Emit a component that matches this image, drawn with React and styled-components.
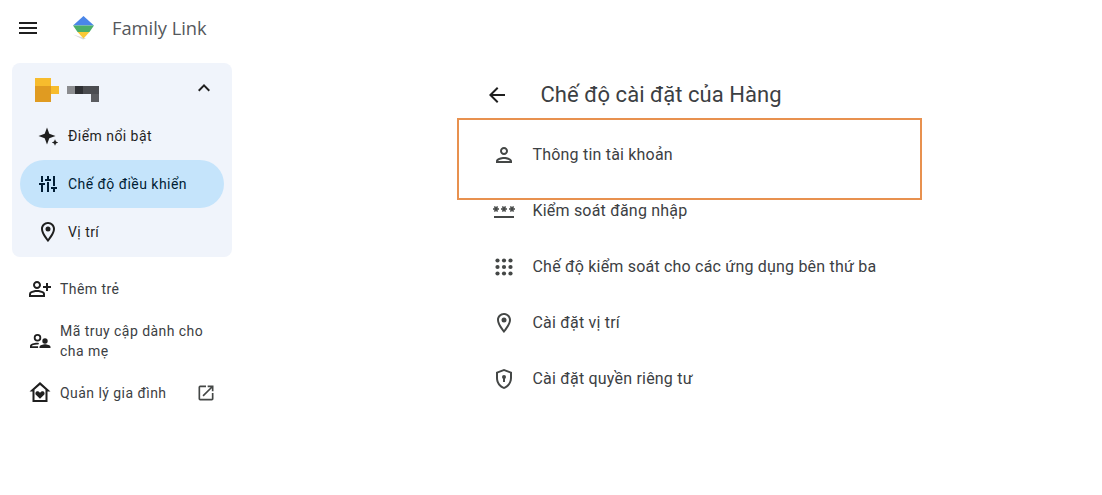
import React from 'react';
import styled, { createGlobalStyle } from 'styled-components';
import {
    MdMenu,
    MdExpandLess,
    MdOutlineLocationOn,
    MdOutlinePersonAddAlt,
    MdOutlineOpenInNew,
    MdArrowBack,
    MdOutlinePerson,
    MdPassword,
} from 'react-icons/md';

const GlobalStyle = createGlobalStyle`
    html, body {
        margin: 0;
        background: #fff;
    }
    body {
        font-family: Roboto, "Liberation Sans", sans-serif;
        color: #3c4043;
    }
`;

const Sparkle = () => (
    <svg width="24" height="24" viewBox="0 0 24 24" fill="currentColor">
        <path d="M11 3.500L13.300 9.700 19.500 12 13.300 14.300 11 20.500 8.700 14.300 2.500 12 8.700 9.700z" />
        <path d="M19 15.300L20 17.500 22.200 18.500 20 19.500 19 21.700 18 19.500 15.800 18.500 18 17.500z" />
    </svg>
);

const Sliders = () => (
    <svg width="24" height="24" viewBox="0 0 24 24" fill="currentColor">
        <rect x="5" y="4" width="2" height="6" />
        <rect x="3" y="11" width="6" height="2" />
        <rect x="5" y="13" width="2" height="7" />
        <rect x="11" y="4" width="2" height="3" />
        <rect x="9" y="7" width="6" height="2" />
        <rect x="11" y="10" width="2" height="10" />
        <rect x="17" y="4" width="2" height="10" />
        <rect x="15" y="15" width="6" height="2" />
        <rect x="17" y="17" width="2" height="3" />
    </svg>
);

const ParentCode = () => (
    <svg width="24" height="24" viewBox="0 0 24 24" fill="currentColor">
        <path d="M9.500 12.500a3.750 3.750 0 1 0 0-7.500 3.750 3.750 0 0 0 0 7.500zm0-5.700a1.950 1.950 0 1 1 0 3.900 1.950 1.950 0 0 1 0-3.900z" />
        <path d="M2 19v-2c0-2.300 4.400-3.300 7-3.300.6 0 1.300.1 2 .2l-.6 1.700c-.5-.1-1-.1-1.400-.1-2.500 0-5.200 1-5.200 1.600v.1h6.300V19z" />
        <circle cx="17" cy="12" r="2.700" />
        <path d="M11.500 19v-1c0-1.800 3.600-2.700 5.500-2.700s5.500.9 5.500 2.700v1z" />
    </svg>
);

const HomeHeart = () => (
    <svg width="24" height="24" viewBox="0 0 24 24" fill="currentColor">
        <path d="M12 1L1.500 10.500h3V21h15V10.500h3zM17.500 19h-11V8.800L12 4l5.500 4.800z" />
        <path d="M12 17.800l-3.900-3.700c-2-2.100.7-5 2.800-3.300l1.100 1 1.100-1c2.100-1.700 4.800 1.200 2.800 3.300z" />
    </svg>
);

const DotGrid = () => (
    <svg width="24" height="24" viewBox="0 0 24 24" fill="currentColor">
        {[5.5, 12, 18.5].map((y) =>
            [5.5, 12, 18.5].map((x) => <circle key={`${x}-${y}`} cx={x} cy={y} r="2.100" />)
        )}
    </svg>
);

const ShieldKey = () => (
    <svg width="24" height="24" viewBox="0 0 24 24" fill="currentColor">
        <path d="M12 2L4 5v6.100c0 5 3.400 9.700 8 10.900 4.600-1.200 8-5.900 8-10.900V5zm6 9.100c0 4-2.500 7.600-6 8.800-3.500-1.200-6-4.800-6-8.800V6.300l6-2.200 6 2.200z" />
        <circle cx="12" cy="10" r="2" />
        <rect x="11" y="10" width="2" height="5" />
    </svg>
);

const Logo = () => (
    <svg width="26" height="30" viewBox="0 0 26 30">
        <path d="M2 21.500l10 5 3-1z" fill="#d8d8d8" />
        <path d="M12.500 3L23 12.500H2z" fill="#4a86e8" />
        <path d="M2 12.500h21l-4.500 6.500H6.500z" fill="#4caf68" />
        <path d="M6.500 19h12l-6 6.500z" fill="#fbc935" />
    </svg>
);

const Avatar = () => (
    <svg width="64" height="24" viewBox="0 0 64 24" shapeRendering="crispEdges">
        <rect x="0" y="0" width="16" height="8" fill="#f7bc2d" />
        <rect x="0" y="8" width="16" height="16" fill="#e09b21" />
        <rect x="16" y="8" width="8" height="8" fill="#f7bc2d" />
        <rect x="32" y="8" width="8" height="8" fill="#8b8c8f" />
        <rect x="40" y="8" width="8" height="8" fill="#2f3034" />
        <rect x="48" y="8" width="16" height="8" fill="#4b4c50" />
        <rect x="56" y="16" width="8" height="8" fill="#5b5c60" />
    </svg>
);

const childItems = [
    { icon: <Sparkle />, label: 'Điểm nổi bật' },
    { icon: <Sliders />, label: 'Chế độ điều khiển', active: true },
    { icon: <MdOutlineLocationOn size={24} />, label: 'Vị trí' },
];

const settings = [
    { icon: <MdOutlinePerson size={26} />, label: 'Thông tin tài khoản' },
    { icon: <MdPassword size={24} />, label: 'Kiểm soát đăng nhập' },
    { icon: <DotGrid />, label: 'Chế độ kiểm soát cho các ứng dụng bên thứ ba' },
    { icon: <MdOutlineLocationOn size={24} />, label: 'Cài đặt vị trí' },
    { icon: <ShieldKey />, label: 'Cài đặt quyền riêng tư' },
];

export default function App() {
    return (
        <>
            <GlobalStyle />
            <Page>
                <Sidebar>
                    <TopBar>
                        <MenuButton>
                            <MdMenu size={24} />
                        </MenuButton>
                        <LogoSlot>
                            <Logo />
                        </LogoSlot>
                        <Brand>Family Link</Brand>
                    </TopBar>
                    <ChildCard>
                        <ChildHeader>
                            <AvatarSlot>
                                <Avatar />
                            </AvatarSlot>
                            <MdExpandLess size={24} />
                        </ChildHeader>
                        {childItems.map((item) => (
                            <ChildRow key={item.label} $active={item.active}>
                                {item.icon}
                                <span>{item.label}</span>
                            </ChildRow>
                        ))}
                    </ChildCard>
                    <SideLinks>
                        <SideLink>
                            <MdOutlinePersonAddAlt size={24} />
                            <span>Thêm trẻ</span>
                        </SideLink>
                        <SideLink>
                            <ParentCode />
                            <span>
                                Mã truy cập dành cho
                                <br />
                                cha mẹ
                            </span>
                        </SideLink>
                        <SideLink>
                            <HomeHeart />
                            <span>Quản lý gia đình</span>
                            <ExternalIcon>
                                <MdOutlineOpenInNew size={20} />
                            </ExternalIcon>
                        </SideLink>
                    </SideLinks>
                </Sidebar>
                <Main>
                    <TitleRow>
                        <MdArrowBack size={24} />
                        <Title>Chế độ cài đặt của Hàng</Title>
                    </TitleRow>
                    <SettingsList>
                        <Highlight />
                        {settings.map((item) => (
                            <SettingRow key={item.label}>
                                <SettingIcon>{item.icon}</SettingIcon>
                                <SettingLabel>{item.label}</SettingLabel>
                            </SettingRow>
                        ))}
                    </SettingsList>
                </Main>
            </Page>
        </>
    );
}

const Page = styled.div`
    display: flex;
    width: 1102px;
    height: 495px;
    overflow: hidden;
`;

const Sidebar = styled.aside`
    width: 244px;
    flex: none;
`;

const TopBar = styled.div`
    height: 56px;
    margin-bottom: 7px;
    display: flex;
    align-items: center;
    color: #1f1f1f;
`;

const MenuButton = styled.div`
    width: 24px;
    height: 24px;
    margin-left: 16px;
`;

const LogoSlot = styled.div`
    width: 26px;
    height: 30px;
    margin-left: 31px;
`;

const Brand = styled.span`
    margin-left: 15px;
    padding-bottom: 2px;
    font-family: "Open Sans", Roboto, sans-serif;
    font-size: 18.300px;
    color: #55585c;
`;

const ChildCard = styled.section`
    margin: 0 12px;
    padding: 0 8px 1px;
    height: 194px;
    box-sizing: border-box;
    background: #f0f4fb;
    border-radius: 8px;
`;

const ChildHeader = styled.div`
    height: 49px;
    padding: 1px 8px 0 15px;
    box-sizing: border-box;
    display: flex;
    align-items: center;
    justify-content: space-between;
    color: #1f1f1f;
`;

const AvatarSlot = styled.div`
    display: flex;
    margin-top: 4px;
`;

const ChildRow = styled.div`
    height: 48px;
    padding-left: 16px;
    display: flex;
    align-items: center;
    gap: 8px;
    border-radius: 24px;
    font-size: 14px;
    letter-spacing: 0.45px;
    color: ${(p) => (p.$active ? '#001d35' : '#1f1f1f')};
    background: ${(p) => (p.$active ? '#c5e4fb' : 'transparent')};
`;

const SideLinks = styled.nav`
    margin-top: 11px;
    padding-left: 28px;
    width: 188px;
`;

const SideLink = styled.div`
    min-height: 42px;
    display: flex;
    align-items: center;
    gap: 8px;
    font-size: 14px;
    line-height: 20px;
    letter-spacing: 0.45px;
    color: #3c4043;
    margin-bottom: 10px;
    & > svg {
        flex: none;
        color: #1f1f1f;
    }
`;

const ExternalIcon = styled.span`
    display: flex;
    margin-left: auto;
    color: #444746;
`;

const Main = styled.main`
    margin-left: 213px;
    width: 465px;
`;

const TitleRow = styled.div`
    height: 118px;
    padding: 72px 0 0 28px;
    box-sizing: border-box;
    display: flex;
    align-items: center;
    gap: 32px;
    color: #1f1f1f;
`;

const Title = styled.h1`
    margin: 0 0 2px -0.5px;
    font-size: 22px;
    font-weight: 400;
    letter-spacing: 0.05px;
    color: #3c4043;
`;

const SettingsList = styled.div`
    position: relative;
    padding-top: 9px;
`;

const Highlight = styled.div`
    position: absolute;
    top: 0;
    left: 0;
    width: 465px;
    height: 82px;
    box-sizing: border-box;
    border: 2px solid #e8914f;
`;

const SettingRow = styled.div`
    height: 56px;
    padding-left: 35px;
    display: flex;
    align-items: center;
    gap: 16.500px;
    font-size: 16px;
    color: #3c4043;
`;

const SettingLabel = styled.span`
    padding-bottom: 2px;
    letter-spacing: 0.2px;
`;

const SettingIcon = styled.span`
    width: 24px;
    height: 24px;
    display: flex;
    align-items: center;
    justify-content: center;
    color: #444746;
`;
